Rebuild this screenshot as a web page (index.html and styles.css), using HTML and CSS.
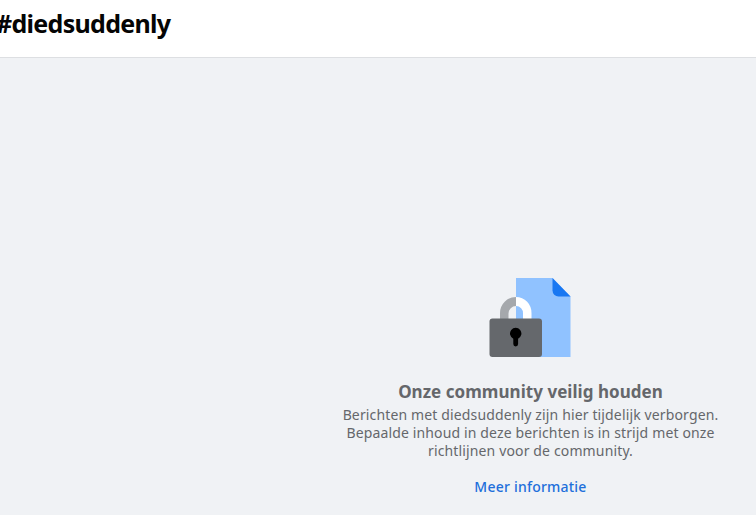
FILE: index.html
```html
<!DOCTYPE html>
<html lang="nl">
<head>
  <meta charset="UTF-8">
  <meta name="viewport" content="width=device-width, initial-scale=1.0">
  <title>#diedsuddenly</title>
  <link rel="stylesheet" href="styles.css">
</head>
<body>
  <header class="page-header">
    <h1>#diedsuddenly</h1>
  </header>

  <main class="content">
    <div class="notice">
      <!-- Document with padlock -->
      <svg class="notice-icon" width="82" height="80" viewBox="0 0 82 80">
        <path fill="#90c2ff" d="M27 1H63.500L81.500 19.500V80H27Z"/>
        <path fill="#1877f2" d="M63.500 1L81.500 19.500H69.500A6 6 0 0 1 63.500 13.500Z"/>
        <path fill="#a5a8ac" d="M11 43V36A16 16 0 0 1 27 20V29A7.500 7.500 0 0 0 19.500 36.500V43Z"/>
        <path fill="#fff" d="M27 20A15.500 15.500 0 0 1 42.500 36V43H34V36.500A7 7 0 0 0 27 29Z"/>
        <rect x="0.500" y="41.500" width="52.500" height="38.500" rx="3" fill="#65686c"/>
        <path d="M24.300 61.700A5.700 5.700 0 1 1 29.100 61.700V67A2.400 2.400 0 0 1 24.300 67Z"/>
      </svg>
      <h2>Onze community veilig houden</h2>
      <p>
        <span class="line">Berichten met diedsuddenly zijn hier tijdelijk verborgen.</span>
        <span class="line">Bepaalde inhoud in deze berichten is in strijd met onze</span>
        <span class="line">richtlijnen voor de community.</span>
      </p>
      <a href="#">Meer informatie</a>
    </div>
  </main>
</body>
</html>
```

FILE: styles.css
```css
body {
  margin: 0;
  height: 515px;
  display: flex;
  flex-direction: column;
  overflow: hidden;
  background: #f0f2f5;
  font-family: "Segoe UI", "Noto Sans", sans-serif;
  color: #65676b;
}

.page-header {
  height: 57px;
  background: #fff;
  border-bottom: 1px solid #dddfe2;
}

.page-header h1 {
  margin: 7px 0 0 -4px;
  font-size: 25px;
  line-height: 32px;
  font-weight: 700;
  letter-spacing: -0.7px;
  color: #050505;
}

.content {
  flex: 1;
  padding: 219px 0 0 305px;
}

.notice {
  width: 451px;
  display: flex;
  flex-direction: column;
  align-items: center;
  text-align: center;
}

.notice-icon {
  display: block;
  margin-right: 2px;
}

.notice h2 {
  margin: 24px 0 0;
  font-size: 17px;
  line-height: 22px;
  font-weight: 700;
  letter-spacing: 0.04px;
}

.notice p {
  margin: 3px 0 0;
  font-size: 14px;
  line-height: 18px;
  letter-spacing: 0.14px;
}

.line {
  display: block;
  white-space: nowrap;
}

.notice a {
  margin-top: 18px;
  font-size: 14px;
  line-height: 18px;
  font-weight: 500;
  letter-spacing: 0.22px;
  color: #216fdb;
  text-decoration: none;
}
```
